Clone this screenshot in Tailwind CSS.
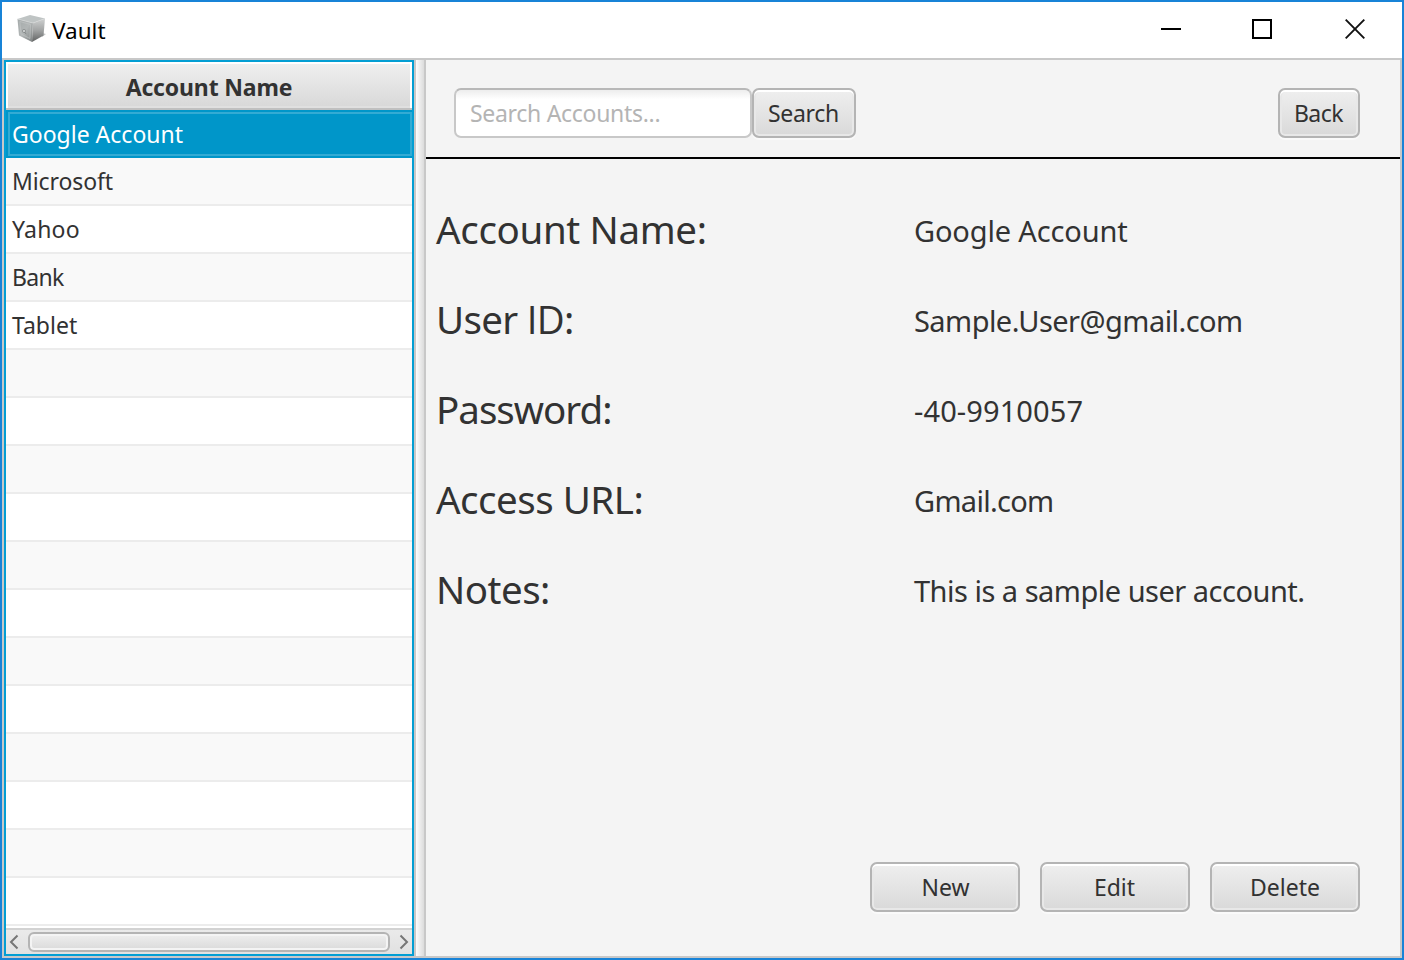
<!DOCTYPE html>
<html lang="en">
<head>
<meta charset="utf-8">
<title>Vault</title>
<script src="https://cdn.jsdelivr.net/npm/@tailwindcss/browser@4"></script>
</head>
<body class="w-[1404px] h-[960px] overflow-hidden">
<div class="w-[1404px] h-[960px] border-2 border-[#1883d7] flex flex-col bg-white text-[#323232] text-[23px] whitespace-nowrap font-['Noto_Sans','Open_Sans',sans-serif]">
  <header class="h-14 shrink-0 flex items-center text-black">
    <svg class="ml-[14px] mt-[-2px] shrink-0" width="32" height="30" viewBox="0 0 32 30">
      <defs>
        <linearGradient id="front" x1="0" y1="0" x2="1" y2="1"><stop offset="0" stop-color="#a4aaaa"/><stop offset=".5" stop-color="#b2b6b6"/><stop offset="1" stop-color="#7c8080"/></linearGradient>
        <linearGradient id="side" x1="0" y1="0" x2="0" y2="1"><stop offset="0" stop-color="#d0d2d2"/><stop offset=".5" stop-color="#a2a4a4"/><stop offset="1" stop-color="#606262"/></linearGradient>
      </defs>
      <path d="M26 19l4 1-4 3z" fill="#c4c6c6"/>
      <path d="M1.500 5L14 1l15 3.500L17 9z" fill="#bfc4c4"/>
      <path d="M1.500 5L17 9l-1 19L3 21.500z" fill="url(#front)"/>
      <path d="M17 9l12-4.500L27.500 21.500 16 28z" fill="url(#side)"/>
      <path d="M3.800 7.500l10.700 3-.6 14L5 20z" fill="none" stroke="#c4c8c8" stroke-width=".6"/>
      <path d="M1.500 5L17 9l12-4.500" fill="none" stroke="#d8dada" stroke-width=".6"/>
      <circle cx="8" cy="17" r="1.600" fill="#d0d3d3" stroke="#7e8282" stroke-width=".7"/>
      <path d="M8.500 18.500l1.800 1.200" stroke="#6e7272" stroke-width=".8"/>
    </svg>
    <span class="ml-1 text-[22.5px] pt-0.5">Vault</span>
    <div class="ml-auto flex items-center pr-[37px] mt-[-2px]">
      <svg width="20" height="20" viewBox="0 0 20 20"><path d="M0 10h20" stroke="#000" stroke-width="2"/></svg>
      <svg class="ml-[71px]" width="20" height="20" viewBox="0 0 20 20"><path d="M1 1h18v18H1z" fill="none" stroke="#000" stroke-width="2"/></svg>
      <svg class="ml-[73px]" width="20" height="20" viewBox="0 0 20 20"><path d="M.7.700l18.600 18.600M19.300.700L.7 19.300" stroke="#111" stroke-width="1.900"/></svg>
    </div>
  </header>
  <div class="h-[900px] flex border-2 border-[#c8c8c8]">
    <aside class="w-[410px] shrink-0 border-2 border-[#039ed3] flex flex-col">
      <div class="h-12 shrink-0 border-b-2 border-[#c0c0c0] bg-white pt-[2px] px-[2px]">
        <div class="h-11 border-b-2 border-[#e0e0e0] bg-linear-to-b from-[#efefef] to-[#d9d9d9] flex items-center justify-center font-bold"><span class="pt-[5px] tracking-[-0.15px]">Account Name</span></div>
      </div>
      <div class="h-12 shrink-0 bg-[#0096c9] pt-[2px] pb-[2px] pl-[2px]"><div class="h-11 border-2 border-[#33abd4] pl-[2px] text-white leading-[40px]">Google Account</div></div>
      <div class="h-12 shrink-0 bg-[#f9f9f9] border-b-2 border-[#ececec] pl-[6px] leading-[47px] tracking-[-0.1px]">Microsoft</div>
      <div class="h-12 shrink-0 border-b-2 border-[#ececec] pl-[6px] leading-[47px] tracking-[0.2px]">Yahoo</div>
      <div class="h-12 shrink-0 bg-[#f9f9f9] border-b-2 border-[#ececec] pl-[6px] leading-[47px] tracking-[-0.7px]">Bank</div>
      <div class="h-12 shrink-0 border-b-2 border-[#ececec] pl-[6px] leading-[47px]">Tablet</div>
      <div class="h-12 shrink-0 bg-[#f9f9f9] border-b-2 border-[#ececec]"></div>
      <div class="h-12 shrink-0 border-b-2 border-[#ececec]"></div>
      <div class="h-12 shrink-0 bg-[#f9f9f9] border-b-2 border-[#ececec]"></div>
      <div class="h-12 shrink-0 border-b-2 border-[#ececec]"></div>
      <div class="h-12 shrink-0 bg-[#f9f9f9] border-b-2 border-[#ececec]"></div>
      <div class="h-12 shrink-0 border-b-2 border-[#ececec]"></div>
      <div class="h-12 shrink-0 bg-[#f9f9f9] border-b-2 border-[#ececec]"></div>
      <div class="h-12 shrink-0 border-b-2 border-[#ececec]"></div>
      <div class="h-12 shrink-0 bg-[#f9f9f9] border-b-2 border-[#ececec]"></div>
      <div class="h-12 shrink-0 border-b-2 border-[#ececec]"></div>
      <div class="h-12 shrink-0 bg-[#f9f9f9] border-b-2 border-[#ececec]"></div>
      <div class="h-12 shrink-0 border-b-2 border-[#ececec]"></div>
      <div class="mt-auto h-[26px] shrink-0 border-t-2 border-[#d2d2d2] bg-linear-to-b from-[#eaeaea] to-[#e1e1e1] flex items-center">
        <svg class="ml-[3px]" width="10" height="16" viewBox="0 0 10 16"><path d="M8.500 1.500L2 8l6.500 6.500" fill="none" stroke="#767676" stroke-width="2"/></svg>
        <div class="ml-[9px] w-[362px] h-5 rounded-[6px] border-2 border-[#b4b4b4] bg-linear-to-b from-[#efefef] to-[#dadada] shadow-[inset_0_0_0_2px_#f4f4f4]"></div>
        <svg class="ml-[9px]" width="10" height="16" viewBox="0 0 10 16"><path d="M1.500 1.500L8 8l-6.500 6.500" fill="none" stroke="#767676" stroke-width="2"/></svg>
      </div>
    </aside>
    <div class="w-3 shrink-0 border-x-2 border-[#c8c8c8] bg-linear-to-r from-[#fcfcfc] to-[#dcdcdc]"></div>
    <main class="flex-1 bg-[#f4f4f4] flex flex-col">
      <div class="h-[99px] shrink-0 border-b-2 border-black flex pt-7 pl-7 pr-10">
        <div class="w-[298px] h-[50px] rounded-[7px] border-2 border-[#c8c8c8] border-t-[#b8b8b8] bg-linear-to-b from-[#ededed] from-0% to-white to-20% pl-[14px] leading-[46px] tracking-[-0.3px] text-[#b4b4b4]">Search Accounts...</div>
        <div class="w-[104px] h-[50px] rounded-[7px] border-2 border-[#b4b4b4] bg-linear-to-b from-[#efefef] to-[#d9d9d9] shadow-[inset_0_2px_#fff,inset_0_0_0_2px_#e8e8e8,0_2px_#fafafa] text-center leading-[46px] tracking-[-0.3px] pr-px">Search</div>
        <div class="ml-auto w-[82px] h-[50px] rounded-[7px] border-2 border-[#b4b4b4] bg-linear-to-b from-[#efefef] to-[#d9d9d9] shadow-[inset_0_2px_#fff,inset_0_0_0_2px_#e8e8e8,0_2px_#fafafa] text-center leading-[46px] tracking-[-0.5px] pr-px">Back</div>
      </div>
      <div class="pt-[25px] pl-[10px] grid grid-cols-[478px_1fr] auto-rows-[90px] items-start text-[29px] leading-[90px]">
        <div class="text-[38.5px] tracking-[-0.35px]">Account Name:</div><div class="pt-[2px] tracking-[-0.15px]">Google Account</div>
        <div class="text-[38.5px] tracking-[-0.7px]">User <span class="font-['Open_Sans']">ID</span>:</div><div class="pt-[2px] tracking-[-0.55px]">Sample.User@gmail.com</div>
        <div class="text-[38.5px] tracking-[-1px]">Password:</div><div class="pt-[2px] tracking-[0.1px]">-40-9910057</div>
        <div class="text-[38.5px] tracking-[-0.5px]">Access URL:</div><div class="pt-[2px] tracking-[-0.7px]">Gmail.com</div>
        <div class="text-[38.5px] tracking-[-0.5px]">Notes:</div><div class="pt-[2px] tracking-[-0.5px]">This is a sample user account.</div>
      </div>
      <div class="mt-auto mb-11 mr-10 flex justify-end gap-5">
        <div class="w-[150px] h-[50px] rounded-[7px] border-2 border-[#b4b4b4] bg-linear-to-b from-[#efefef] to-[#d9d9d9] shadow-[inset_0_2px_#fff,inset_0_0_0_2px_#e8e8e8,0_2px_#fafafa] text-center leading-[46px] pl-px">New</div>
        <div class="w-[150px] h-[50px] rounded-[7px] border-2 border-[#b4b4b4] bg-linear-to-b from-[#efefef] to-[#d9d9d9] shadow-[inset_0_2px_#fff,inset_0_0_0_2px_#e8e8e8,0_2px_#fafafa] text-center leading-[46px] pr-px">Edit</div>
        <div class="w-[150px] h-[50px] rounded-[7px] border-2 border-[#b4b4b4] bg-linear-to-b from-[#efefef] to-[#d9d9d9] shadow-[inset_0_2px_#fff,inset_0_0_0_2px_#e8e8e8,0_2px_#fafafa] text-center leading-[46px]">Delete</div>
      </div>
    </main>
  </div>
</div>
</body>
</html>
